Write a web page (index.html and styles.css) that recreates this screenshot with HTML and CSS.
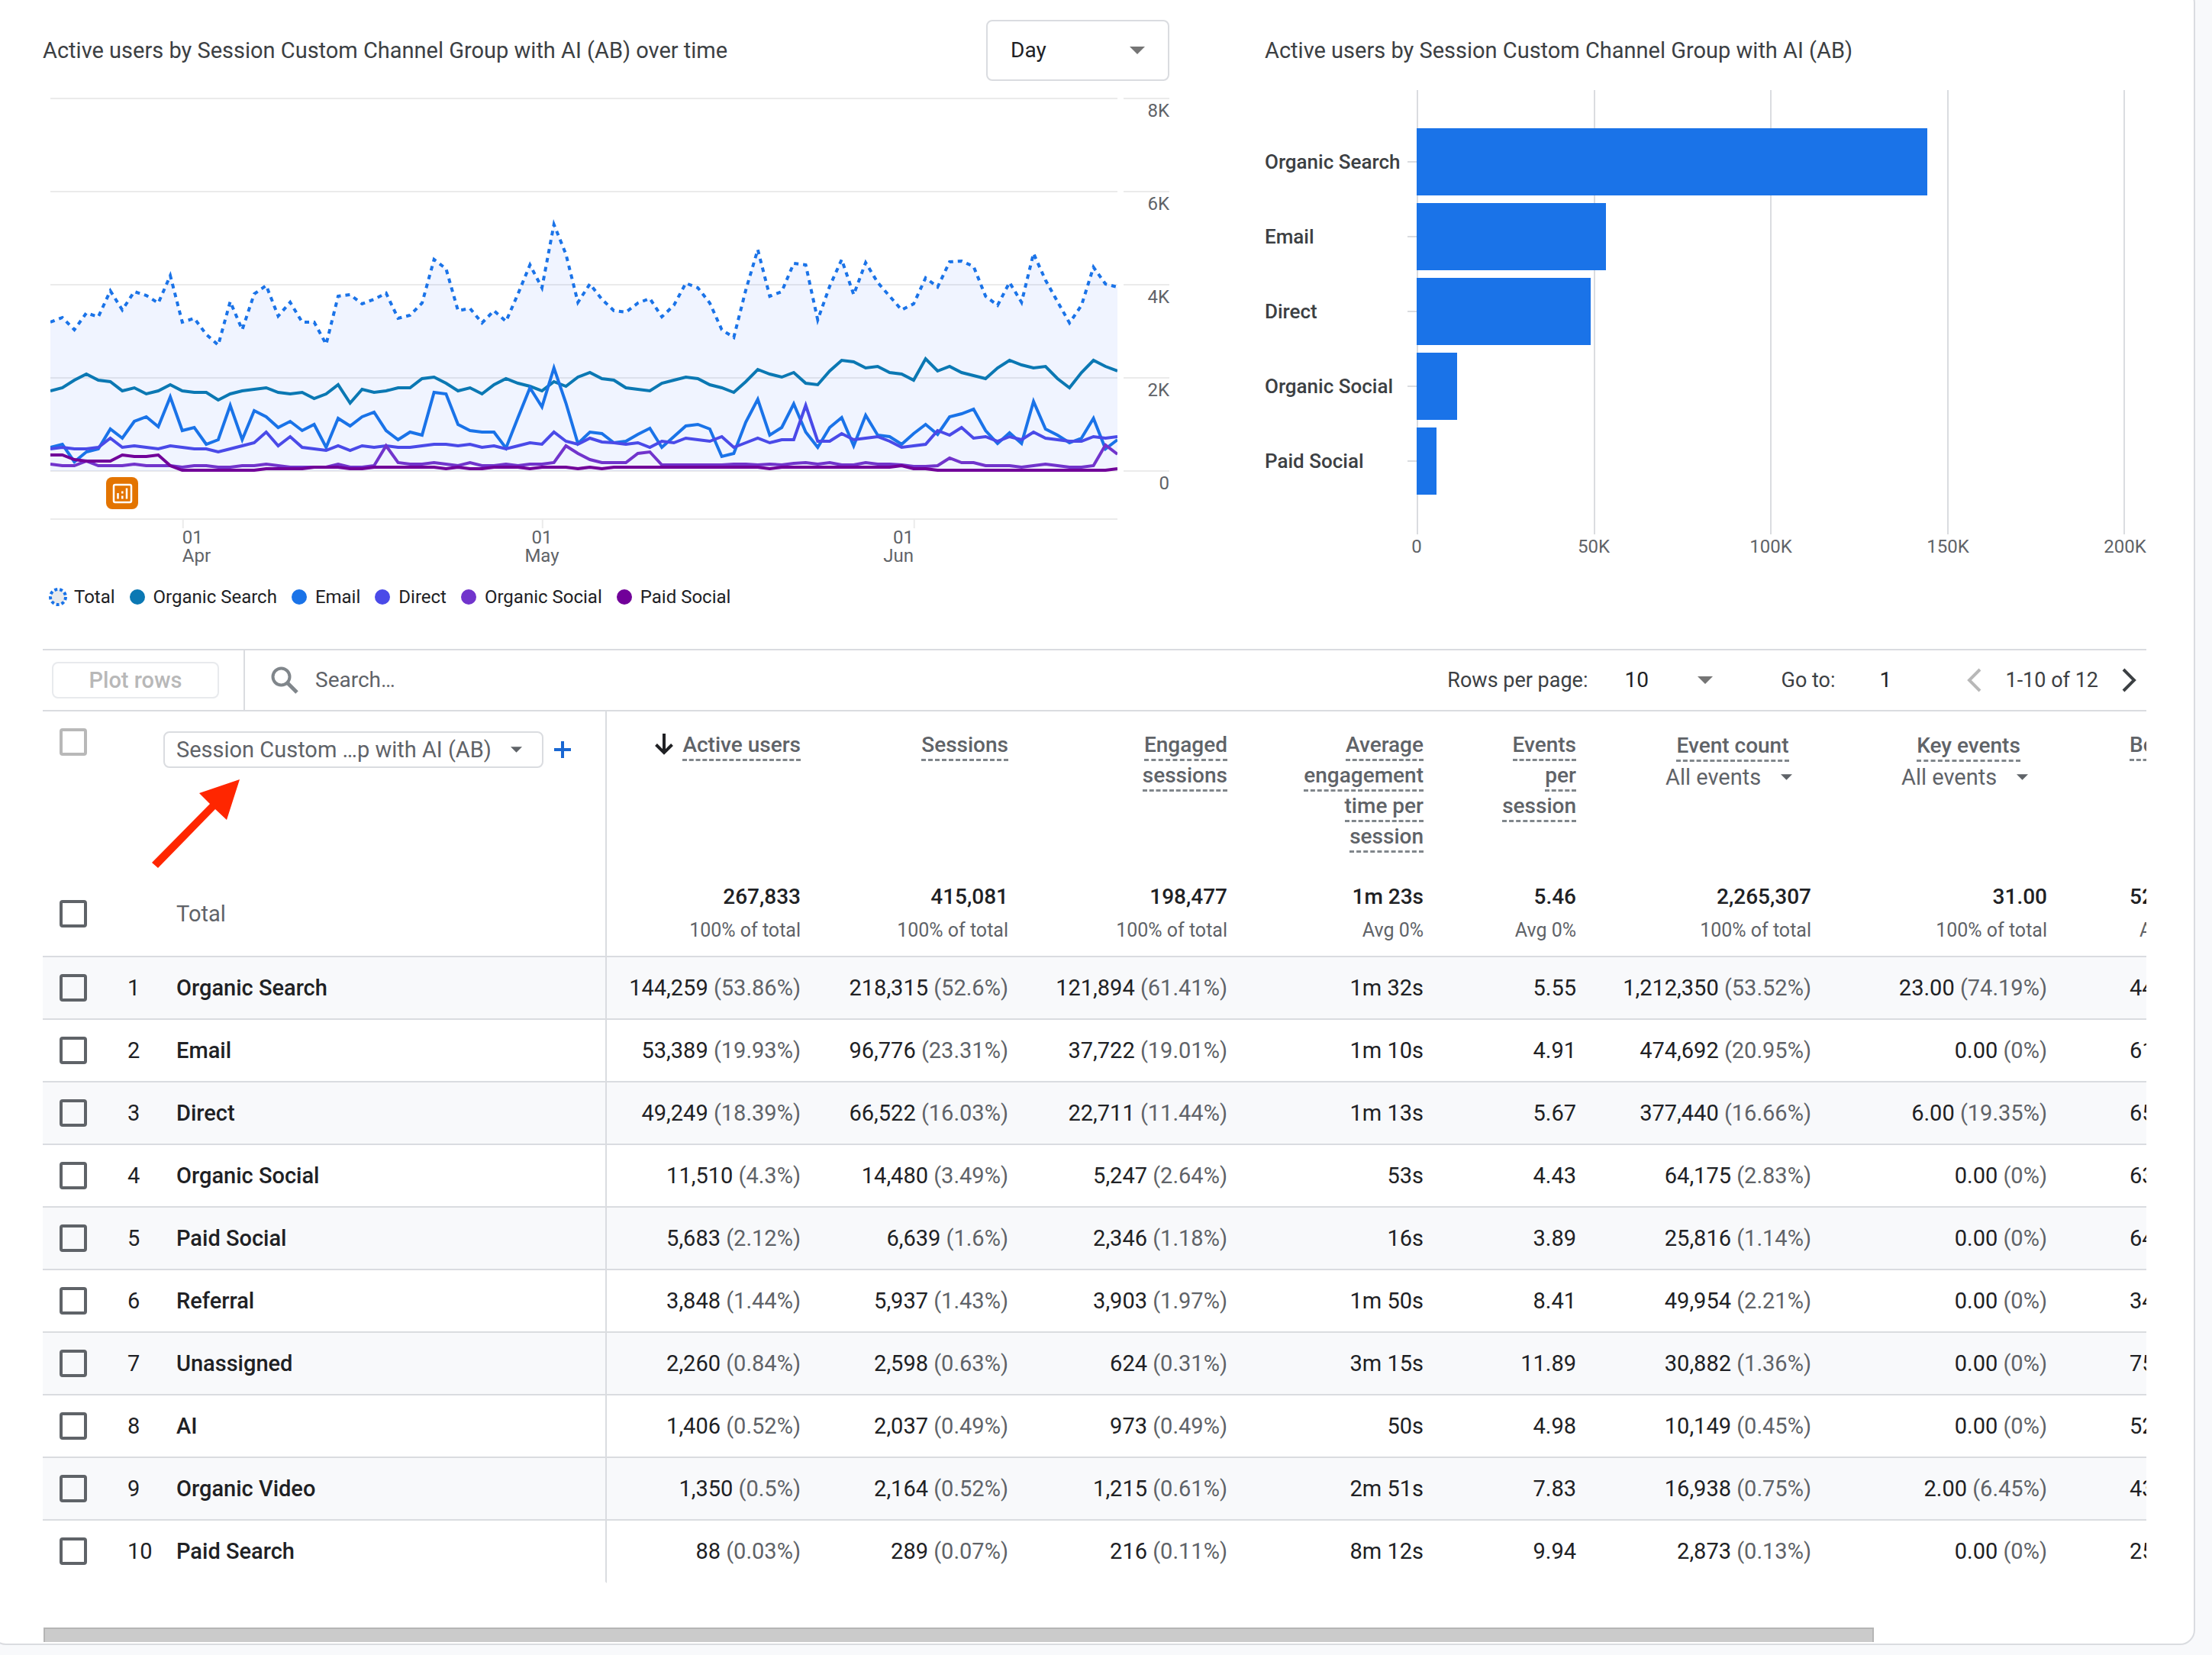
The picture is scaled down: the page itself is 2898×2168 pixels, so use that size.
FILE: index.html
```html
<!DOCTYPE html>
<html lang="en">
<head>
<meta charset="utf-8">
<title>Traffic acquisition</title>
<link rel="stylesheet" href="styles.css">
</head>
<body>
<main class="card">
  <div class="charts">
    <section class="panel">
      <header class="panel-head">
        <h2>Active users by Session Custom Channel Group with AI (AB) over time</h2>
        <label class="pick pick-day" aria-label="Granularity">
          <select><option>Day</option></select>
          <svg class="caret" viewBox="0 0 20 10"><path d="M0 0h20L10 10z"/></svg>
        </label>
      </header>
      <div class="trend">
        <div class="plot">
          <svg viewBox="0 128 89 564" preserveAspectRatio="none" role="img" aria-label="Active users per day">
            <path class="grid" d="M0 129H89M0 251H89M0 373H89M0 495H89M0 617H89M0 680H89M11.06 680V692M41.05 680V692M72.05 680V692"/>
            <path class="area" d="M0,617 0,422 1,416 2,432 3,410 4,415 5,381 6,406 7,382 8,387 9,397 10,361 11,422 12,417 13,438 14,452 15,395 16,432 17,385 18,374 19,414 20,396 21,422 22,422 23,451 24,388 25,386 26,398 27,392 28,384 29,417 30,413 31,397 32,340 33,352 34,407 35,404 36,423 37,407 38,421 39,385 40,347 41,377 42,294 43,333 44,396 45,372 46,392 47,407 48,409 49,397 50,391 51,415 52,400 53,371 54,377 55,397 56,432 57,442 58,380 59,327 60,388 61,382 62,345 63,347 64,419 65,375 66,340 67,386 68,344 69,370 70,388 71,406 72,398 73,364 74,376 75,343 76,342 77,349 78,388 79,400 80,370 81,396 82,332 83,367 84,395 85,423 86,400 87,350 88,372 89,376 89,617z"/>
            <polyline class="line total" points="0,422 1,416 2,432 3,410 4,415 5,381 6,406 7,382 8,387 9,397 10,361 11,422 12,417 13,438 14,452 15,395 16,432 17,385 18,374 19,414 20,396 21,422 22,422 23,451 24,388 25,386 26,398 27,392 28,384 29,417 30,413 31,397 32,340 33,352 34,407 35,404 36,423 37,407 38,421 39,385 40,347 41,377 42,294 43,333 44,396 45,372 46,392 47,407 48,409 49,397 50,391 51,415 52,400 53,371 54,377 55,397 56,432 57,442 58,380 59,327 60,388 61,382 62,345 63,347 64,419 65,375 66,340 67,386 68,344 69,370 70,388 71,406 72,398 73,364 74,376 75,343 76,342 77,349 78,388 79,400 80,370 81,396 82,332 83,367 84,395 85,423 86,400 87,350 88,372 89,376"/>
            <polyline class="line organic-search" points="0,512 1,508 2,498 3,490 4,498 5,500 6,512 7,508 8,516 9,512 10,504 11,512 12,514 13,514 14,524 15,516 16,512 17,510 18,508 19,514 20,516 21,514 22,522 23,516 24,504 25,528 26,510 27,514 28,512 29,508 30,508 31,496 32,494 33,502 34,512 35,508 36,516 37,504 38,496 39,502 40,506 41,512 42,500 43,506 44,494 45,488 46,496 47,498 48,508 49,510 50,512 51,502 52,498 53,494 54,496 55,504 56,508 57,514 58,500 59,484 60,490 61,494 62,488 63,502 64,504 65,486 66,472 67,474 68,482 69,480 70,488 71,490 72,498 73,470 74,486 75,480 76,488 77,492 78,496 79,482 80,472 81,478 82,482 83,480 84,496 85,508 86,488 87,472 88,480 89,486"/>
            <polyline class="line email" points="0,586 1,582 2,605 3,592 4,588 5,562 6,574 7,552 8,546 9,559 10,520 11,564 12,560 13,582 14,576 15,531 16,576 17,538 18,546 19,560 20,552 21,564 22,556 23,586 24,548 25,558 26,546 27,540 28,564 29,576 30,566 31,570 32,514 33,516 34,556 35,564 36,566 37,566 38,587 39,547 40,508 41,533 42,482 43,528 44,581 45,566 46,568 47,580 48,578 49,569 50,561 51,586 52,572 53,558 54,556 55,562 56,598 57,594 58,553 59,523 60,570 61,560 62,529 63,566 64,586 65,560 66,547 67,584 68,544 69,570 70,572 71,582 72,568 73,556 74,569 75,546 76,542 77,536 78,564 79,581 80,567 81,581 82,526 83,562 84,570 85,580 86,574 87,548 88,588 89,576"/>
            <polyline class="line direct" points="0,588 1,586 2,588 3,588 4,586 5,574 6,586 7,584 8,586 9,588 10,584 11,586 12,588 13,588 14,592 15,588 16,584 17,580 18,566 19,584 20,572 21,586 22,588 23,590 24,584 25,590 26,584 27,586 28,584 29,586 30,586 31,584 32,582 33,582 34,584 35,582 36,586 37,584 38,588 39,584 40,580 41,582 42,566 43,578 44,582 45,574 46,579 47,580 48,582 49,580 50,586 51,578 52,580 53,574 54,576 55,578 56,572 57,586 58,580 59,574 60,580 61,576 62,576 63,531 64,578 65,578 66,568 67,576 68,574 69,572 70,578 71,586 72,584 73,582 74,564 75,570 76,560 77,574 78,572 79,578 80,572 81,576 82,566 83,574 84,576 85,578 86,578 87,572 88,574 89,572"/>
            <polyline class="line organic-social" points="0,608 1,610 2,610 3,604 4,610 5,610 6,610 7,608 8,610 9,610 10,610 11,612 12,610 13,610 14,612 15,612 16,610 17,610 18,608 19,610 20,612 21,612 22,612 23,612 24,608 25,612 26,612 27,610 28,584 29,606 30,608 31,608 32,606 33,608 34,610 35,606 36,610 37,610 38,608 39,610 40,608 41,608 42,606 43,584 44,594 45,602 46,606 47,606 48,606 49,594 50,592 51,609 52,609 53,609 54,609 55,609 56,609 57,608 58,608 59,609 60,608 61,609 62,607 63,606 64,608 65,606 66,609 67,609 68,606 69,608 70,608 71,609 72,611 73,611 74,610 75,600 76,606 77,606 78,610 79,610 80,610 81,612 82,610 83,608 84,610 85,612 86,612 87,610 88,583 89,595"/>
            <polyline class="line paid-social" points="0,596 1,596 2,602 3,604 4,604 5,604 6,596 7,598 8,598 9,596 10,610 11,616 17,616 18,614 21,614 22,612 24,612 25,614 26,614 27,612 32,612 33,614 34,612 35,614 36,614 37,612 39,612 40,614 41,612 43,612 44,614 45,612 46,614 47,612 59,612 60,614 61,612 70,612 71,610 72,614 73,614 74,616 88,616 89,614"/>
          </svg>
          <button class="note" aria-label="Annotation">
            <svg viewBox="0 0 42 42"><rect x="10" y="10" width="23" height="23" rx="2" fill="none" stroke="#fff" stroke-width="2.500"/><path d="M15.500 28.500v-7.500M21.300 28.500v-4M21.300 21.500v-3M27 28.500V14.500" stroke="#fff" stroke-width="2.500" fill="none"/></svg>
          </button>
          <div class="dates">
            <span class="apr">01<br>Apr</span><span class="may">01<br>May</span><span class="jun">01<br>Jun</span>
          </div>
        </div>
        <div class="y-axis"><span>8K</span><span>6K</span><span>4K</span><span>2K</span><span>0</span></div>
      </div>
      <ul class="legend">
        <li><svg class="ring" viewBox="0 0 24 24"><circle cx="12" cy="12" r="10"/></svg>Total</li>
        <li><i class="dot organic-search"></i>Organic Search</li>
        <li><i class="dot email"></i>Email</li>
        <li><i class="dot direct"></i>Direct</li>
        <li><i class="dot organic-social"></i>Organic Social</li>
        <li><i class="dot paid-social"></i>Paid Social</li>
      </ul>
    </section>
    <section class="panel">
      <header class="panel-head">
        <h2>Active users by Session Custom Channel Group with AI (AB)</h2>
      </header>
      <div class="bar-chart">
        <div class="bar-grid"><i></i><i></i><i></i><i></i></div>
        <div class="bar-rows">
          <div class="bar-row"><span>Organic Search</span><i class="tick"></i><div class="track"><div class="bar" style="width:72.13%"></div></div></div>
          <div class="bar-row"><span>Email</span><i class="tick"></i><div class="track"><div class="bar" style="width:26.69%"></div></div></div>
          <div class="bar-row"><span>Direct</span><i class="tick"></i><div class="track"><div class="bar" style="width:24.62%"></div></div></div>
          <div class="bar-row"><span>Organic Social</span><i class="tick"></i><div class="track"><div class="bar" style="width:5.76%"></div></div></div>
          <div class="bar-row"><span>Paid Social</span><i class="tick"></i><div class="track"><div class="bar" style="width:2.84%"></div></div></div>
        </div>
        <div class="bar-axis"><span>0</span><span>50K</span><span>100K</span><span>150K</span><span>200K</span></div>
      </div>
    </section>
  </div>

  <div class="toolbar">
    <div class="plot-cell"><button class="plot-rows" disabled>Plot rows</button></div>
    <label class="search">
      <svg viewBox="0 0 36 36" fill="none" stroke="#80868b" stroke-width="4"><circle cx="13.500" cy="13.500" r="11"/><path d="M21.500 21.500 34 34" stroke-width="5"/></svg>
      <input type="text" placeholder="Search…" aria-label="Search">
    </label>
    <label class="rows" for="rows">Rows per page:</label>
    <span class="pick pick-rows">
      <select id="rows"><option>10</option></select>
      <svg class="caret" viewBox="0 0 20 10"><path d="M0 0h20L10 10z"/></svg>
    </span>
    <label class="goto">Go to: <input type="text" value="1"></label>
    <button class="chev prev" aria-label="Previous page" disabled><svg viewBox="0 0 20 32"><path d="M18 2 4 16l14 14"/></svg></button>
    <span class="range">1-10 of 12</span>
    <button class="chev" aria-label="Next page"><svg viewBox="0 0 20 32"><path d="M2 2l14 14L2 30"/></svg></button>
  </div>

  <div class="table-wrap">
  <table>
    <colgroup><col class="c-check"><col class="c-index"><col><col class="c-users"><col class="c-sessions"><col class="c-engaged"><col class="c-time"><col class="c-per"><col class="c-count"><col class="c-key"><col class="c-bounce"></colgroup>
    <thead>
      <tr class="head">
        <th class="check"><input type="checkbox" aria-label="Select all" disabled></th>
        <th></th>
        <th class="dim">
          <div class="dim-box">
            <label class="pick pick-dim" aria-label="Primary dimension">
              <select><option>Session Custom …p with AI (AB)</option></select>
              <svg class="caret small" viewBox="0 0 20 10"><path d="M0 0h20L10 10z"/></svg>
            </label>
            <button class="plus" aria-label="Add dimension"><svg viewBox="0 0 22 22"><path d="M11 0v22M0 11h22"/></svg></button>
          </div>
          <svg class="pointer" viewBox="0 0 116 116"><path d="M115 0 62 18l14 14L0 109l8 7 75-77 15 14z"/></svg>
        </th>
        <th class="num"><svg class="sort" viewBox="0 0 24 28"><path d="M12 0v25M1.500 14.500 12 25l10.500-10.500"/></svg><span class="term">Active users</span></th>
        <th class="num"><span class="term">Sessions</span></th>
        <th class="num"><span class="term">Engaged<br>sessions</span></th>
        <th class="num"><span class="term">Average<br>engagement<br>time per<br>session</span></th>
        <th class="num"><span class="term">Events<br>per<br>session</span></th>
        <th class="num"><div class="stack"><span class="term">Event count</span><label class="pick pick-all" aria-label="Event"><select><option>All events</option></select><svg class="caret small" viewBox="0 0 20 10"><path d="M0 0h20L10 10z"/></svg></label></div></th>
        <th class="num"><div class="stack"><span class="term">Key events</span><label class="pick pick-all" aria-label="Key event"><select><option>All events</option></select><svg class="caret small" viewBox="0 0 20 10"><path d="M0 0h20L10 10z"/></svg></label></div></th>
        <th class="cut"><span class="term">Bounce</span></th>
      </tr>
      <tr class="sum">
        <td class="check"><input type="checkbox" aria-label="Select total"></td><td></td><td class="name">Total</td>
        <td class="num"><b>267,833</b><small>100% of total</small></td>
        <td class="num"><b>415,081</b><small>100% of total</small></td>
        <td class="num"><b>198,477</b><small>100% of total</small></td>
        <td class="num"><b>1m 23s</b><small>Avg 0%</small></td>
        <td class="num"><b>5.46</b><small>Avg 0%</small></td>
        <td class="num"><b>2,265,307</b><small>100% of total</small></td>
        <td class="num"><b>31.00</b><small>100% of total</small></td>
        <td class="cut"><b>52</b><small>Avg 0%</small></td>
      </tr>
    </thead>
    <tbody>
      <tr><td class="check"><input type="checkbox" aria-label="Organic Search"></td><td class="index">1</td><td class="name">Organic Search</td><td class="num">144,259 <span>(53.86%)</span></td><td class="num">218,315 <span>(52.6%)</span></td><td class="num">121,894 <span>(61.41%)</span></td><td class="num">1m 32s</td><td class="num">5.55</td><td class="num">1,212,350 <span>(53.52%)</span></td><td class="num">23.00 <span>(74.19%)</span></td><td class="cut">44</td></tr>
      <tr><td class="check"><input type="checkbox" aria-label="Email"></td><td class="index">2</td><td class="name">Email</td><td class="num">53,389 <span>(19.93%)</span></td><td class="num">96,776 <span>(23.31%)</span></td><td class="num">37,722 <span>(19.01%)</span></td><td class="num">1m 10s</td><td class="num">4.91</td><td class="num">474,692 <span>(20.95%)</span></td><td class="num">0.00 <span>(0%)</span></td><td class="cut">61</td></tr>
      <tr><td class="check"><input type="checkbox" aria-label="Direct"></td><td class="index">3</td><td class="name">Direct</td><td class="num">49,249 <span>(18.39%)</span></td><td class="num">66,522 <span>(16.03%)</span></td><td class="num">22,711 <span>(11.44%)</span></td><td class="num">1m 13s</td><td class="num">5.67</td><td class="num">377,440 <span>(16.66%)</span></td><td class="num">6.00 <span>(19.35%)</span></td><td class="cut">65</td></tr>
      <tr><td class="check"><input type="checkbox" aria-label="Organic Social"></td><td class="index">4</td><td class="name">Organic Social</td><td class="num">11,510 <span>(4.3%)</span></td><td class="num">14,480 <span>(3.49%)</span></td><td class="num">5,247 <span>(2.64%)</span></td><td class="num">53s</td><td class="num">4.43</td><td class="num">64,175 <span>(2.83%)</span></td><td class="num">0.00 <span>(0%)</span></td><td class="cut">63</td></tr>
      <tr><td class="check"><input type="checkbox" aria-label="Paid Social"></td><td class="index">5</td><td class="name">Paid Social</td><td class="num">5,683 <span>(2.12%)</span></td><td class="num">6,639 <span>(1.6%)</span></td><td class="num">2,346 <span>(1.18%)</span></td><td class="num">16s</td><td class="num">3.89</td><td class="num">25,816 <span>(1.14%)</span></td><td class="num">0.00 <span>(0%)</span></td><td class="cut">64</td></tr>
      <tr><td class="check"><input type="checkbox" aria-label="Referral"></td><td class="index">6</td><td class="name">Referral</td><td class="num">3,848 <span>(1.44%)</span></td><td class="num">5,937 <span>(1.43%)</span></td><td class="num">3,903 <span>(1.97%)</span></td><td class="num">1m 50s</td><td class="num">8.41</td><td class="num">49,954 <span>(2.21%)</span></td><td class="num">0.00 <span>(0%)</span></td><td class="cut">34</td></tr>
      <tr><td class="check"><input type="checkbox" aria-label="Unassigned"></td><td class="index">7</td><td class="name">Unassigned</td><td class="num">2,260 <span>(0.84%)</span></td><td class="num">2,598 <span>(0.63%)</span></td><td class="num">624 <span>(0.31%)</span></td><td class="num">3m 15s</td><td class="num">11.89</td><td class="num">30,882 <span>(1.36%)</span></td><td class="num">0.00 <span>(0%)</span></td><td class="cut">75</td></tr>
      <tr><td class="check"><input type="checkbox" aria-label="AI"></td><td class="index">8</td><td class="name">AI</td><td class="num">1,406 <span>(0.52%)</span></td><td class="num">2,037 <span>(0.49%)</span></td><td class="num">973 <span>(0.49%)</span></td><td class="num">50s</td><td class="num">4.98</td><td class="num">10,149 <span>(0.45%)</span></td><td class="num">0.00 <span>(0%)</span></td><td class="cut">52</td></tr>
      <tr><td class="check"><input type="checkbox" aria-label="Organic Video"></td><td class="index">9</td><td class="name">Organic Video</td><td class="num">1,350 <span>(0.5%)</span></td><td class="num">2,164 <span>(0.52%)</span></td><td class="num">1,215 <span>(0.61%)</span></td><td class="num">2m 51s</td><td class="num">7.83</td><td class="num">16,938 <span>(0.75%)</span></td><td class="num">2.00 <span>(6.45%)</span></td><td class="cut">43</td></tr>
      <tr><td class="check"><input type="checkbox" aria-label="Paid Search"></td><td class="index">10</td><td class="name">Paid Search</td><td class="num">88 <span>(0.03%)</span></td><td class="num">289 <span>(0.07%)</span></td><td class="num">216 <span>(0.11%)</span></td><td class="num">8m 12s</td><td class="num">9.94</td><td class="num">2,873 <span>(0.13%)</span></td><td class="num">0.00 <span>(0%)</span></td><td class="cut">25</td></tr>
    </tbody>
  </table>
  </div>
  <div class="scrollbar"><div class="thumb"></div></div>
</main>
</body>
</html>
```
FILE: styles.css
```css
* { box-sizing: border-box; }
html { overflow: hidden auto; scrollbar-width: none; }
body { margin: 0; background: #f8f9fb; color: #202124; font: 28px/40px Roboto, "Liberation Sans", sans-serif; }
button, input, select { font: inherit; color: inherit; margin: 0; padding: 0; border: 0; background: none; }
svg { display: block; }

.card { margin: -16px 22px 14px -12px; padding: 40px 62px 2px 66px; background: #fff; border: 2px solid #dadce0; border-radius: 20px; }

.charts { display: grid; grid-template-columns: 1476fr 1155fr; gap: 125px; }
.panel-head { display: flex; align-items: center; justify-content: space-between; height: 80px; }
h2 { margin: 0; font-size: 29px; font-weight: 400; color: #3c4043; white-space: nowrap; }

.pick { display: inline-grid; align-items: center; }
.pick select { grid-area: 1 / 1; width: 100%; height: 100%; appearance: none; outline: 0; }
.caret { grid-area: 1 / 1; justify-self: end; width: 20px; height: 10px; fill: #757575; pointer-events: none; }
.caret.small { width: 15px; height: 8px; fill: #5f6368; }
.pick-day { width: 240px; height: 80px; border: 2px solid #dadce0; border-radius: 8px; }
.pick-day select { padding-left: 30px; }
.pick-day .caret { margin-right: 30px; }

.trend { display: flex; gap: 8px; margin-top: 22px; font-size: 24px; line-height: 24px; color: #5f6368; }
.plot { flex: 1; position: relative; margin-left: 10px; }
.plot > svg { width: 100%; height: 564px; }
.plot path, .plot polyline { vector-effect: non-scaling-stroke; }
.grid { stroke: #ebebeb; stroke-width: 2; fill: none; }
.area { fill: #3b78ff; fill-opacity: .08; }
.line { fill: none; stroke-width: 4; stroke-miterlimit: 8; }
.line.total { stroke: #1a73e8; stroke-dasharray: 6 6; }
.line.organic-search { stroke: #0b78b3; }
.line.email { stroke: #1a73e8; }
.line.direct { stroke: #4a4ae8; }
.line.organic-social { stroke: #7134cc; }
.line.paid-social { stroke: #710099; }
.note { position: absolute; left: 5.2%; top: 497px; width: 42px; height: 42px; border-radius: 8px; background: #e37400; }
.dates { display: grid; grid-template-columns: 11fr 15fr 30fr 16fr 17fr; }
.apr { grid-column: 2; }
.may { grid-column: 3; text-align: center; }
.jun { grid-column: 4; text-align: right; }
.y-axis { width: 60px; text-align: right; }
.y-axis span { display: block; height: 122px; padding-top: 3px; border-top: 2px solid #ebebeb; }

.legend { display: flex; gap: 19px; margin: 26px 0 0 8px; padding: 0; list-style: none; font-size: 24px; line-height: 32px; }
.legend li { display: flex; align-items: center; gap: 11px; }
.ring { width: 24px; height: 24px; margin-right: -2px; fill: #e8eaed; stroke: #1a73e8; stroke-width: 4; stroke-dasharray: 4 3; }
.dot { width: 20px; height: 20px; border-radius: 50%; }
.dot.organic-search { background: #0b78b3; }
.dot.email { background: #1a73e8; }
.dot.direct { background: #4a4ae8; }
.dot.organic-social { background: #7134cc; }
.dot.paid-social { background: #710099; }

.bar-chart { display: grid; grid-template-columns: 199px 1fr 28px; margin-top: 12px; font-size: 24px; }
.bar-grid { grid-area: 1 / 2; display: flex; border-right: 2px solid #dadce0; }
.bar-grid i { flex: 1; border-left: 2px solid #dadce0; }
.bar-rows { grid-area: 1 / 1 / 2 / 3; display: grid; gap: 10px; padding: 50px 0 52px; }
.bar-row { display: grid; grid-template-columns: 187px 12px 1fr; align-items: center; height: 88px; font-size: 26px; font-weight: 500; color: #3c4043; }
.tick { height: 2px; background: #dadce0; }
.bar { height: 88px; background: #1a73e8; }
.bar-axis { grid-area: 2 / 2; display: grid; grid-template-columns: repeat(5, 1fr); width: 125%; margin-left: -12.5%; text-align: center; line-height: 32px; color: #5f6368; }

.toolbar { display: flex; align-items: center; height: 82px; margin-top: 52px; border: solid #dadce0; border-width: 2px 0; font-size: 27px; color: #3c4043; }
.plot-cell { display: flex; align-items: center; align-self: stretch; width: 265px; padding-left: 12px; border-right: 2px solid #dadce0; }
.plot-rows { width: 219px; height: 48px; border: 2px solid #e8eaed; border-radius: 8px; font-size: 29px; font-weight: 500; color: #b8b8b8; }
.search { flex: 1; display: flex; align-items: center; gap: 22px; padding-left: 34px; }
.search svg { width: 36px; height: 36px; }
.search input { flex: 1; font-size: 28px; outline: 0; }
.search input::placeholder { color: #5f6368; opacity: 1; }
.pick-rows { width: 116px; height: 40px; margin: 0 89px 0 48px; font-size: 28px; color: #202124; }
.goto { display: flex; }
.goto input { width: 40px; margin: 0 74px 0 58px; font-size: 28px; color: #202124; }
.chev svg { width: 20px; height: 32px; fill: none; stroke: #3c4043; stroke-width: 4; }
.chev.prev svg { stroke: #b8b8b8; }
.range { margin: 0 31px; }
.chev:last-child { margin-right: 12px; }

table { width: 100%; table-layout: fixed; border-collapse: separate; border-spacing: 0; }
.c-check { width: 96px; }
.c-index { width: 58px; }
.c-users { width: 274px; }
.c-sessions { width: 272px; }
.c-engaged { width: 287px; }
.c-time { width: 257px; }
.c-per { width: 200px; }
.c-count { width: 308px; }
.c-key { width: 309px; }
.c-bounce { width: 110px; }
th, td { height: 82px; padding: 0; text-align: left; white-space: nowrap; border-bottom: 2px solid #dadce0; font-size: 29px; }
tbody tr:last-child td { border-bottom-color: transparent; }
tbody tr:nth-child(odd) { background: #f8f9fb; }
.check { padding-left: 22px; }
.check input { display: block; width: 36px; height: 36px; appearance: none; border: 4px solid #5f6368; border-radius: 4px; }
.check input:disabled { border-color: #b8b8b8; }
.index { padding-left: 15px; }
.name, .dim { border-right: 2px solid #dadce0; }
.name { padding-left: 21px; font-weight: 500; }
.num { padding-right: 20px; text-align: right; }
.num > span:not(.term) { color: #5f6368; }
.cut { padding-left: 88px; overflow: hidden; }

.head th { height: 206px; padding-top: 24px; vertical-align: top; border-bottom: 0; font-weight: 500; color: #5f6368; font-size: 28px; }
.head .check { padding-top: 22px; }
.head .dim { position: relative; padding: 26px 0 0 4px; font-size: 29px; font-weight: 400; }
.dim-box { display: flex; align-items: center; gap: 14px; }
.pick-dim { width: 498px; height: 48px; border: 2px solid #dadce0; border-radius: 8px; }
.pick-dim select { padding-left: 15px; }
.pick-dim .caret { margin-right: 26px; }
.plus svg { width: 22px; height: 22px; stroke: #1967d2; stroke-width: 4; }
.pointer { position: absolute; left: -11px; top: 89px; width: 116px; height: 116px; fill: #ff2600; }
.term { padding-bottom: 2px; border-bottom: 3px dashed #80868b; -webkit-box-decoration-break: clone; box-decoration-break: clone; }
.sort { display: inline-block; width: 24px; height: 28px; margin-right: 12px; vertical-align: -4px; fill: none; stroke: #202124; stroke-width: 4; }
.stack { display: inline-flex; flex-direction: column; align-items: center; margin-right: 15px; }
.stack .term { margin-top: 4px; line-height: 33px; }
.pick-all { width: 176px; height: 40px; padding-right: 10px; font-size: 29px; font-weight: 400; }

.sum td { height: 116px; padding-top: 3px; }
.sum .name { font-weight: 400; color: #5f6368; }
.sum b, .sum small { display: block; }
.sum b { font-size: 28px; font-weight: 500; line-height: 44px; }
.sum small { font-size: 25px; line-height: 43px; color: #5f6368; }
.sum .cut small { padding-left: 13px; }

.scrollbar { margin-top: 58px; }
.thumb { width: 87%; height: 19px; margin-left: 1px; background: #cbcbcb; border: 2px solid #b5b5b5; border-bottom: 0; }
```
